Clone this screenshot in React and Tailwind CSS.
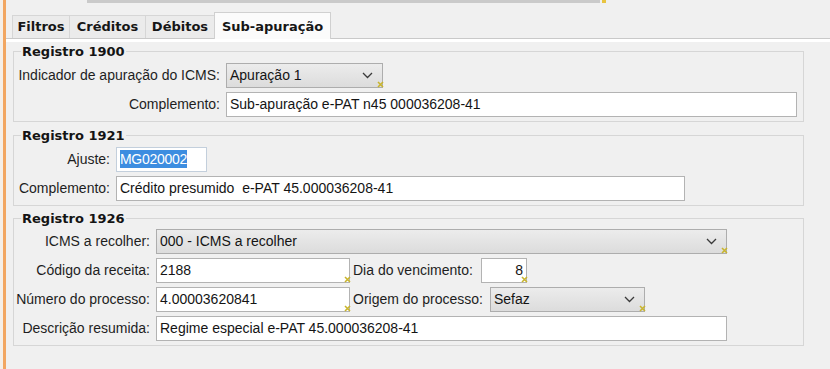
import React from "react";

const Marker = () => (
  <svg
    className="absolute right-[-2px] bottom-[-1px]"
    width="7"
    height="7"
    viewBox="0 0 7 7"
  >
    <path d="M1 1 L6 6 M6 1 L1 6" stroke="#c9b52e" strokeWidth="1.6" />
  </svg>
);

const Chevron = () => (
  <svg width="11" height="7" viewBox="0 0 11 7" className="shrink-0">
    <polyline points="1,1 5.5,5.5 10,1" fill="none" stroke="#3a3a3a" strokeWidth="1.3" />
  </svg>
);

const Field = ({ w, children, marker, right, className = "" }) => (
  <div
    className={`relative h-[25px] bg-white border border-[#b3b3b3] flex items-center px-[3px] text-[#141414] ${right ? "justify-end" : ""} ${className}`}
    style={{ width: w }}
  >
    <span className="whitespace-nowrap">{children}</span>
    {marker && <Marker />}
  </div>
);

const Combo = ({ w, children, marker }) => (
  <div
    className="relative h-[25px] border border-[#adadad] bg-gradient-to-b from-[#ececec] to-[#dcdcdc] flex items-center justify-between pl-[3px] pr-[9px] text-[#141414]"
    style={{ width: w }}
  >
    <span className="whitespace-nowrap">{children}</span>
    <Chevron />
    {marker && <Marker />}
  </div>
);

const Label = ({ w, children, left }) => (
  <span
    className={`shrink-0 whitespace-nowrap ${left ? "text-left -ml-[3px]" : "text-right"}`}
    style={{ width: w }}
  >
    {children}
  </span>
);

const Group = ({ title, className = "", children }) => (
  <fieldset className={`ml-[7px] w-[791px] border border-[#d6d6d6] pb-[4px] ${className}`}>
    <legend className="ml-[7px] px-[1px] font-['DejaVu_Sans',sans-serif] font-bold text-[13px] leading-[15px] text-[#141414]">
      {title}
    </legend>
    <div className="flex flex-col gap-[4px]">{children}</div>
  </fieldset>
);

const Tab = ({ children, w, active }) =>
  active ? (
    <div
      className="h-[27px] -mb-px bg-[#fbfbfb] border-x border-t border-[#d0d0d0] flex items-start justify-center pt-[4px]"
      style={{ width: w }}
    >
      {children}
    </div>
  ) : (
    <div
      className="h-[23px] bg-[#ebebeb] border-l border-t border-[#d6d6d6] flex items-center justify-center"
      style={{ width: w }}
    >
      {children}
    </div>
  );

export default function App() {
  return (
    <div className="w-[830px] h-[369px] overflow-hidden bg-[#f0f0f0] flex font-['Liberation_Sans',Arial,sans-serif] text-[14px] text-[#1e1e1e]">
      <div className="w-[3px] shrink-0 bg-[#f5efe8]" />
      <div className="w-[3px] shrink-0 bg-[#f2a661]" />
      <div className="flex-1 flex flex-col">
        {/* bottom edge of the combo above */}
        <div className="relative ml-[81px] w-[513px] h-[3px] bg-[#cacaca]">
          <div className="absolute right-[-6px] top-0 w-[4px] h-[3px] bg-[#e8c440]" />
        </div>

        {/* tabs */}
        <div className="mt-[9px] h-[27px] flex items-end border-b border-[#c9c9c9] pl-[6px] font-['DejaVu_Sans',sans-serif] font-bold text-[13px] text-[#161616]">
          <Tab w={57}>Filtros</Tab>
          <Tab w={76}>Créditos</Tab>
          <Tab w={69}>Débitos</Tab>
          <Tab w={117} active>
            Sub-apuração
          </Tab>
        </div>
        <div className="h-[3px] bg-white" />

        <Group title="Registro 1900" className="mt-[2px] pt-[4px]">
          <div className="flex items-center gap-[6px]">
            <Label w={206}>Indicador de apuração do ICMS:</Label>
            <Combo w={157} marker>
              Apuração 1
            </Combo>
          </div>
          <div className="flex items-center gap-[6px]">
            <Label w={206}>Complemento:</Label>
            <Field w={571}>Sub-apuração e-PAT n45 000036208-41</Field>
          </div>
        </Group>

        <Group title="Registro 1921" className="mt-[6px] pt-[4px]">
          <div className="flex items-center gap-[6px]">
            <Label w={96}>Ajuste:</Label>
            <Field w={91} className="border-[#c3cfdc] px-[2px]">
              <span className="bg-[#3d8de0] text-white leading-[18px] inline-block tracking-[-0.3px]">MG020002</span>
            </Field>
          </div>
          <div className="flex items-center gap-[6px]">
            <Label w={96}>Complemento:</Label>
            <Field w={569}>Crédito presumido&nbsp; e-PAT 45.000036208-41</Field>
          </div>
        </Group>

        <Group title="Registro 1926" className="mt-[5px] pt-[3px]">
          <div className="flex items-center gap-[6px]">
            <Label w={136}>ICMS a recolher:</Label>
            <Combo w={571} marker>
              000 - ICMS a recolher
            </Combo>
          </div>
          <div className="flex items-center gap-[6px]">
            <Label w={136}>Código da receita:</Label>
            <Field w={194} marker>
              2188
            </Field>
            <Label w={122} left>
              Dia do vencimento:
            </Label>
            <Field w={46} marker right>
              8
            </Field>
          </div>
          <div className="flex items-center gap-[6px]">
            <Label w={136}>Número do processo:</Label>
            <Field w={194} marker>
              4.00003620841
            </Field>
            <Label w={131} left>
              Origem do processo:
            </Label>
            <Combo w={155} marker>
              Sefaz
            </Combo>
          </div>
          <div className="flex items-center gap-[6px]">
            <Label w={136}>Descrição resumida:</Label>
            <Field w={571}>Regime especial e-PAT 45.000036208-41</Field>
          </div>
        </Group>
      </div>
    </div>
  );
}
